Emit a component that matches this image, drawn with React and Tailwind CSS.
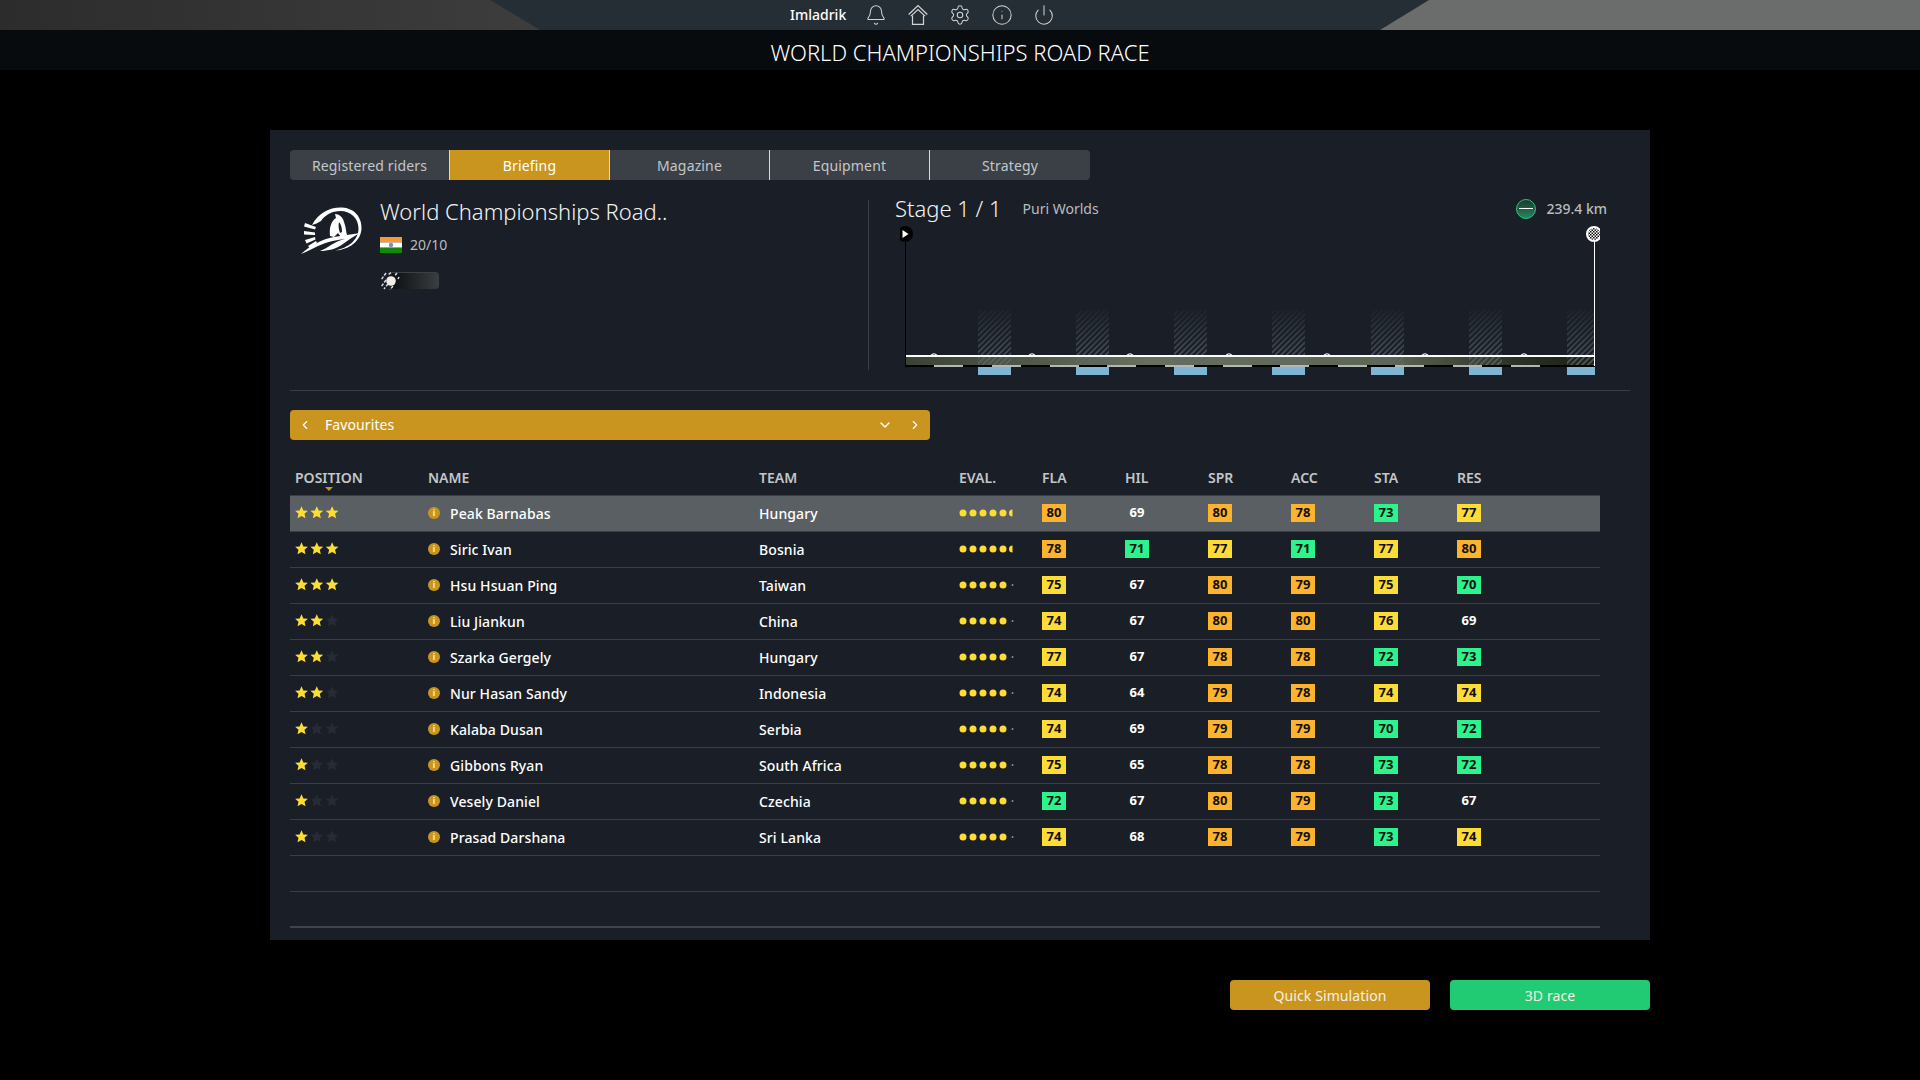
import React from 'react';
import { Bell, Settings, Info, Power, ChevronLeft, ChevronRight, ChevronDown } from 'lucide-react';

const riders = [
    { stars: 3, name: 'Peak Barnabas', team: 'Hungary', dots: 6, stats: [80, 69, 80, 78, 73, 77], plain: [1] },
    { stars: 3, name: 'Siric Ivan', team: 'Bosnia', dots: 6, stats: [78, 71, 77, 71, 77, 80], plain: [] },
    { stars: 3, name: 'Hsu Hsuan Ping', team: 'Taiwan', dots: 5, stats: [75, 67, 80, 79, 75, 70], plain: [1] },
    { stars: 2, name: 'Liu Jiankun', team: 'China', dots: 5, stats: [74, 67, 80, 80, 76, 69], plain: [1, 5] },
    { stars: 2, name: 'Szarka Gergely', team: 'Hungary', dots: 5, stats: [77, 67, 78, 78, 72, 73], plain: [1] },
    { stars: 2, name: 'Nur Hasan Sandy', team: 'Indonesia', dots: 5, stats: [74, 64, 79, 78, 74, 74], plain: [1] },
    { stars: 1, name: 'Kalaba Dusan', team: 'Serbia', dots: 5, stats: [74, 69, 79, 79, 70, 72], plain: [1] },
    { stars: 1, name: 'Gibbons Ryan', team: 'South Africa', dots: 5, stats: [75, 65, 78, 78, 73, 72], plain: [1] },
    { stars: 1, name: 'Vesely Daniel', team: 'Czechia', dots: 5, stats: [72, 67, 80, 79, 73, 67], plain: [1, 5] },
    { stars: 1, name: 'Prasad Darshana', team: 'Sri Lanka', dots: 5, stats: [74, 68, 78, 79, 73, 74], plain: [1] },
];

const tabs = ['Registered riders', 'Briefing', 'Magazine', 'Equipment', 'Strategy'];
const columns = ['FLA', 'HIL', 'SPR', 'ACC', 'STA', 'RES'];
const rowGrid = 'grid grid-cols-[133px_331px_200px_83px_83px_83px_83px_83px_83px_1fr] items-center pl-[5px]';

const statColor = (value) => {
    if (value >= 78) return 'bg-[#fdb32b]';
    if (value >= 74) return 'bg-[#fddc36]';
    return 'bg-[#2bf48c]';
};

const HomeIcon = () => (
    <svg width="22" height="22" viewBox="0 0 20 20" fill="none" stroke="#d2d5d8" strokeWidth="1.100">
        <path d="M1.500 9.500 10 1.500l8.500 8" />
        <path d="M3.500 11 10 5l6.500 6" />
        <path d="M5 10.500v8h10v-8" />
    </svg>
);

const Logo = () => (
    <svg width="70" height="56" viewBox="0 0 70 56" fill="#ffffff">
        <path d="M14 21C20 9 32 3 44 3.500 56 4 64 13 63.500 24.500 63 37 51 46 37 46.500 50 44 60.500 36 60.500 24.500 60.500 14 52 7 42.500 7 34 7 27 11 23 17 20 19 17 20 14 21z" />
        <path fillRule="evenodd" d="M32 32C31 24 33 17 38 14L37 10C41 10 45 13 46 18 48 23 48 28 49 31L43 33 40 29 36 33zM41 18c2 2 3 6 3 10l-2 1c-1-3-2-7-1-11z" />
        <path d="M3 50C13 41 24 35 36 33L62 29C55 33 50 36 45 40 38 45 30 47 22 47 27 45 30 43 33 41 38 38 42 36 47 35 36 36 25 39 16 44 12 46 8 48 3 50z" />
        <path d="M7 19l11 4-1 2.500-11-3zM6 27l11 1.500v2.500l-11-.5zM7 36l10-3 .5 2.500-9 4zM10 42l8-5 1 2-7 5z" />
    </svg>
);

const Flag = () => (
    <svg width="22" height="16" viewBox="0 0 22 16">
        <rect width="22" height="5.4" fill="#f79a33" />
        <rect y="5.400" width="22" height="5.300" fill="#ffffff" />
        <rect y="10.700" width="22" height="5.300" fill="#128807" />
        <circle cx="11" cy="8" r="2.200" fill="#8a87c4" />
    </svg>
);

const WeatherBadge = () => (
    <div className="relative h-[18px] w-[59px]">
        <div className="absolute right-0 top-0 h-[17px] w-[47px] rounded-r-[4px] border-t border-[#3c3f43] bg-gradient-to-r from-[#0e1013] to-[#3b3e42]" />
        <svg className="absolute left-0 top-0" width="22" height="18" viewBox="0 0 22 18">
            <circle cx="11" cy="9" r="4.800" fill="#f0ede2" />
            <g stroke="#d8dadb" strokeWidth="1.500" strokeDasharray="3 1.500" fill="none">
                <path d="M6 1 1 8" />
                <path d="M11 0.500 8 3" />
                <path d="M17 1l-2 2.500" />
                <path d="M6 8 1 15" />
                <path d="M8 12l-4 5" />
                <path d="M13 14l-3 4" />
                <path d="M19 5l-1 2" />
            </g>
        </svg>
    </div>
);

const StageChart = () => {
    const blocks = [978, 1076, 1174, 1272, 1371, 1469, 1567];
    const dashes = [934, 992, 1050, 1107, 1165, 1223, 1280, 1338, 1395, 1453, 1511];
    const bumps = [934, 1032, 1130, 1229, 1327, 1425, 1524];
    return (
        <svg width="700" height="150" viewBox="900 226 700 150" className="block">
            <defs>
                <pattern id="hatch" width="4" height="4" patternUnits="userSpaceOnUse" patternTransform="rotate(45)">
                    <rect width="1.500" height="4" fill="#5d686f" />
                </pattern>
                <linearGradient id="fade" x1="0" y1="0" x2="0" y2="1">
                    <stop offset="0" stopColor="#fff" stopOpacity="0" />
                    <stop offset="1" stopColor="#fff" stopOpacity="1" />
                </linearGradient>
                <linearGradient id="grass" x1="0" y1="0" x2="1" y2="0">
                    <stop offset="0" stopColor="#3a4234" />
                    <stop offset="0.35" stopColor="#66705a" />
                    <stop offset="0.7" stopColor="#5d6650" />
                    <stop offset="0.88" stopColor="#2d3327" />
                    <stop offset="1" stopColor="#1b1f18" />
                </linearGradient>
                <mask id="fadeMask" maskUnits="userSpaceOnUse" x="900" y="305" width="700" height="62">
                    <rect x="900" y="305" width="700" height="62" fill="url(#fade)" />
                </mask>
                <pattern id="checks" width="3" height="3" patternUnits="userSpaceOnUse">
                    <rect width="1.500" height="1.500" fill="#111" />
                    <rect x="1.500" y="1.500" width="1.500" height="1.500" fill="#111" />
                </pattern>
            </defs>
            <rect x="906" y="357" width="688" height="8" fill="url(#grass)" />
            <rect x="905" y="365" width="690" height="2" fill="#000000" />
            {dashes.map((x) => <rect key={x} x={x} y="365" width="29" height="2" fill="#b4b8b4" />)}
            {blocks.map((x) => (
                <g key={x}>
                    <rect x={x} y="310" width={Math.min(33, 1594 - x)} height="55" fill="url(#hatch)" mask="url(#fadeMask)" />
                    <rect x={x} y="367" width={Math.min(33, 1595 - x)} height="8" fill="#7fb4d2" />
                </g>
            ))}
            <rect x="905" y="355" width="689" height="2" fill="#ffffff" />
            {bumps.map((x) => <path key={x} d={`M${x - 3} 355.500q3-3.500 6 0`} fill="none" stroke="#fff" strokeWidth="1.200" />)}
            <rect x="905" y="234" width="1" height="132" fill="#000000" />
            <circle cx="905" cy="234" r="8" fill="#000000" />
            <path d="M902.500 230l6 4-6 4z" fill="#ffffff" />
            <rect x="1594" y="236" width="1" height="130" fill="#ffffff" />
            <circle cx="1594" cy="234" r="8" fill="#ffffff" />
            <circle cx="1594" cy="234" r="6" fill="url(#checks)" />
        </svg>
    );
};

const Stars = ({ count }) => (
    <svg width="44" height="14" viewBox="0 0 44 14">
        {[0, 1, 2].map((i) => (
            <path
                key={i}
                transform={`translate(${i * 15.300} 0)`}
                d="M6.500.2 8.400 4.400l4.500.4-3.400 3 1 4.500L6.500 10 2.500 12.300l1-4.500-3.400-3 4.500-.4z"
                fill={i < count ? '#fddc36' : '#272c34'}
            />
        ))}
    </svg>
);

const Dots = ({ count }) => (
    <svg width="56" height="10" viewBox="0 0 56 10">
        {[0, 1, 2, 3, 4].map((i) => <circle key={i} cx={4 + i * 10} cy="5" r="3.500" fill="#fddc36" />)}
        {count > 5 ? (
            <path d="M53.500 1.500a3.500 3.500 0 0 0 0 7z" fill="#fddc36" />
        ) : (
            <circle cx="53.500" cy="5" r="1" fill="#8f9185" />
        )}
    </svg>
);

const InfoDot = () => (
    <span className="flex h-[12px] w-[12px] items-center justify-center rounded-full bg-[#c9951f] text-[8px] font-bold leading-none text-[#fff3d0]">i</span>
);

const RiderRow = ({ rider, active }) => (
    <div className={`${rowGrid} h-[36px] border-b border-[#3a3f47] pb-[2px] ${active ? 'bg-[#5a5f64]' : ''}`}>
        <Stars count={rider.stars} />
        <div className="flex items-center">
            <InfoDot />
            <span className="ml-[10px] mt-[2px] text-[14px] font-medium tracking-[0.1px] text-white">{rider.name}</span>
        </div>
        <span className="mt-[2px] text-[14px] font-medium tracking-[0.1px] text-white">{rider.team}</span>
        <Dots count={rider.dots} />
        {rider.stats.map((value, i) => (
            rider.plain.includes(i) ? (
                <span key={i} className="w-[24px] text-center text-[13px] font-bold text-white">{value}</span>
            ) : (
                <span key={i} className={`flex h-[18px] w-[24px] items-center justify-center text-[13px] font-bold text-[#111] ${statColor(value)}`}>{value}</span>
            )
        ))}
    </div>
);

const App = () => {
    return (
        <div className="min-h-[1080px] w-[1920px] bg-black font-['Noto_Sans',sans-serif]">
            <div className="relative flex h-[30px] items-center bg-[#262e35] pl-[790px]">
                <div className="absolute left-0 top-0 h-[30px] w-[540px] bg-gradient-to-r from-[#2c2c2c] to-[#3d3d3d] [clip-path:polygon(0_0,490px_0,540px_100%,0_100%)]" />
                <div className="absolute right-0 top-0 h-[30px] w-[540px] bg-[#6b6d6c] [clip-path:polygon(49px_0,100%_0,100%_100%,0_100%)]" />
                <div className="relative flex items-center">
                    <span className="w-[65px] text-[14px] font-medium leading-none text-white">Imladrik</span>
                    <div className="flex w-[42px] justify-center"><Bell size={22} strokeWidth={1.1} color="#d2d5d8" /></div>
                    <div className="flex w-[42px] justify-center"><HomeIcon /></div>
                    <div className="flex w-[42px] justify-center"><Settings size={22} strokeWidth={1.1} color="#d2d5d8" /></div>
                    <div className="flex w-[42px] justify-center"><Info size={22} strokeWidth={1.1} color="#d2d5d8" /></div>
                    <div className="flex w-[42px] justify-center"><Power size={22} strokeWidth={1.1} color="#d2d5d8" /></div>
                </div>
            </div>
            <div className="flex h-[40px] items-center justify-center bg-[#080b0d] pt-[5px] text-[22px] font-light uppercase text-white">
                World Championships Road Race
            </div>

            <div className="ml-[270px] mt-[60px] h-[810px] w-[1380px] bg-[#1a1f27] px-[20px] pt-[20px]">
                <div className="grid h-[30px] w-[800px] grid-cols-[159px_160px_160px_160px_161px] overflow-hidden rounded-[4px] bg-[#3b4047] text-[14px] tracking-[0.15px]">
                    {tabs.map((tab, i) => (
                        <div
                            key={tab}
                            className={`flex items-center justify-center ${i > 0 ? 'border-l border-[#d8d8d8]' : ''} ${tab === 'Briefing' ? 'bg-[#c9951f] text-white' : 'text-[#c3c6c9]'}`}
                        >
                            {tab}
                        </div>
                    ))}
                </div>

                <div className="mt-[20px] flex h-[170px]">
                    <div className="flex w-[579px] border-r border-[#3a3f47]">
                        <div className="ml-[8px] mt-[4px] h-[56px] w-[70px]"><Logo /></div>
                        <div className="ml-[12px]">
                            <div className="mt-[-1px] text-[22px] font-light leading-[24px] text-[#f2f2f2]">World Championships Road..</div>
                            <div className="mt-[11px] flex items-center">
                                <Flag />
                                <span className="ml-[8px] text-[14px] text-[#b9bcbf]">20/10</span>
                            </div>
                            <div className="mt-[17px]"><WeatherBadge /></div>
                        </div>
                    </div>
                    <div className="flex-1 pl-[26px]">
                        <div className="mt-[-1px] flex h-[18px] w-[714px] items-center">
                            <span className="text-[22px] font-light leading-none text-[#f2f2f2]">Stage 1 / 1</span>
                            <span className="ml-[21px] mt-[1px] text-[14px] text-[#b9bcbf]">Puri Worlds</span>
                            <span className="ml-auto mt-[1px] flex h-[20px] w-[20px] items-center justify-center rounded-full border border-[#2fbf80] bg-gradient-to-b from-[#1a3a30] to-[#1f8a5c]">
                                <span className="h-[1px] w-[14px] bg-white" />
                            </span>
                            <span className="ml-[10px] mr-[2px] text-[14px] font-medium text-[#b9bcbf]">239.4 km</span>
                        </div>
                        <div className="ml-[5px] mt-[9px]"><StageChart /></div>
                    </div>
                </div>

                <div className="mt-[20px] h-px w-[1340px] bg-[#3a3f47]" />

                <div className="mt-[19px] flex h-[30px] w-[640px] items-center rounded-[4px] bg-[#c9951f] pb-[1px] text-[14px] tracking-[0.1px] text-white">
                    <ChevronLeft size={14} className="ml-[8px]" />
                    <span className="ml-[13px]">Favourites</span>
                    <ChevronDown size={16} className="ml-auto" />
                    <ChevronRight size={14} className="ml-[15px] mr-[8px]" />
                </div>

                <div className="mt-[27px] w-[1310px]">
                    <div className={`${rowGrid} relative h-[28px] pb-[8px] text-[14px] font-semibold text-[#c3c6c9]`}>
                        {['POSITION', 'NAME', 'TEAM', 'EVAL.', ...columns].map((label) => <span key={label}>{label}</span>)}
                        <span className="absolute left-[35px] top-[20px] h-0 w-0 border-x-[4px] border-t-[4px] border-x-transparent border-t-[#c9951f]" />
                    </div>
                    <div className="border-t border-[#3a3f47]">
                        {riders.map((rider, i) => <RiderRow key={rider.name} rider={rider} active={i === 0} />)}
                    </div>
                    <div className="h-[36px] border-b border-[#3a3f47]" />
                    <div className="h-[36px] border-b-2 border-[#3f444c]" />
                </div>
            </div>

            <div className="ml-[270px] mt-[40px] flex w-[1380px] justify-end gap-[20px] text-[14px] tracking-[0.1px] text-[#f5f0e0]">
                <div className="flex h-[30px] w-[200px] items-center justify-center rounded-[4px] bg-[#c9951f]">Quick Simulation</div>
                <div className="flex h-[30px] w-[200px] items-center justify-center rounded-[4px] bg-[#20cb74]">3D race</div>
            </div>
        </div>
    );
};

export default App;
